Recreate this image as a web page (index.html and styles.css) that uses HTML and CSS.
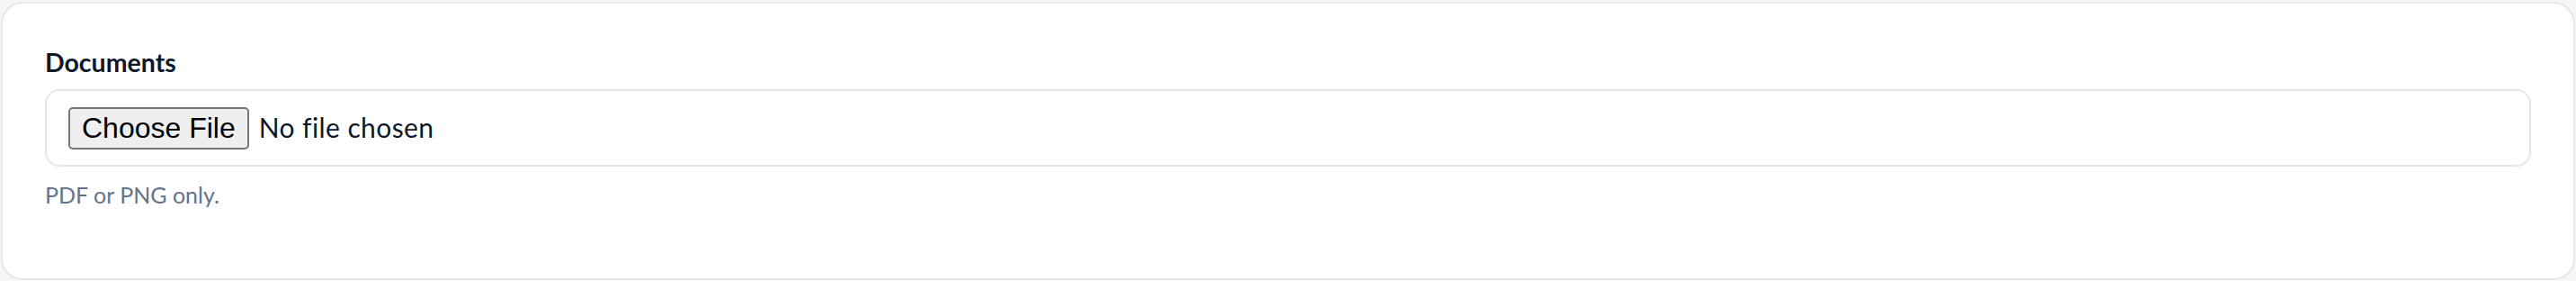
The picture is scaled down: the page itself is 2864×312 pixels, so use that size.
FILE: index.html
```html
<!DOCTYPE html>
<html lang="en">
<head>
<meta charset="utf-8">
<title>Documents</title>
<link rel="stylesheet" href="styles.css">
</head>
<body>
<div class="card">
  <label class="field-label" for="docs">Documents</label>
  <input class="file-input" id="docs" type="file" accept=".pdf,.png">
  <p class="help">PDF or PNG only.</p>
</div>
</body>
</html>
```

FILE: styles.css
```css
html, body {
  margin: 0;
  padding: 0;
}
body {
  background: #f6f6f7;
  padding: 2px 1px 1px 1px;
  font-family: Lato, "Noto Sans", sans-serif;
}
.card {
  background: #ffffff;
  border: 2px solid #e5e7eb;
  border-radius: 24px;
  padding: 47px 47px 75px 47px;
  display: flex;
  flex-direction: column;
  gap: 12px;
  height: 309px;
  box-sizing: border-box;
}
.field-label {
  display: block;
  font-size: 28.5px;
  line-height: 36px;
  font-weight: 700;
  color: #0f172a;
}
.file-input {
  display: block;
  box-sizing: border-box;
  width: 100%;
  height: 86px;
  margin: 0;
  padding: 17px 24px;
  border: 2px solid #e2e8f0;
  border-radius: 16px;
  background: #ffffff;
  font-family: Lato, "Noto Sans", sans-serif;
  font-size: 30px;
  letter-spacing: 0.4px;
  line-height: 47px;
  color: #0f172a;
}
.file-input::file-selector-button {
  font-family: "Liberation Sans", Arial, sans-serif;
  font-size: 32px;
  letter-spacing: 0;
  height: 47px;
  box-sizing: border-box;
  padding: 0 13px;
  margin: 0 11px 0 0;
  border: 2px solid #767676;
  border-radius: 5px;
  background: #efefef;
  color: #000000;
}
.help {
  margin: 1px 0 0 0;
  font-size: 25px;
  line-height: 36px;
  color: #64748b;
}
```
